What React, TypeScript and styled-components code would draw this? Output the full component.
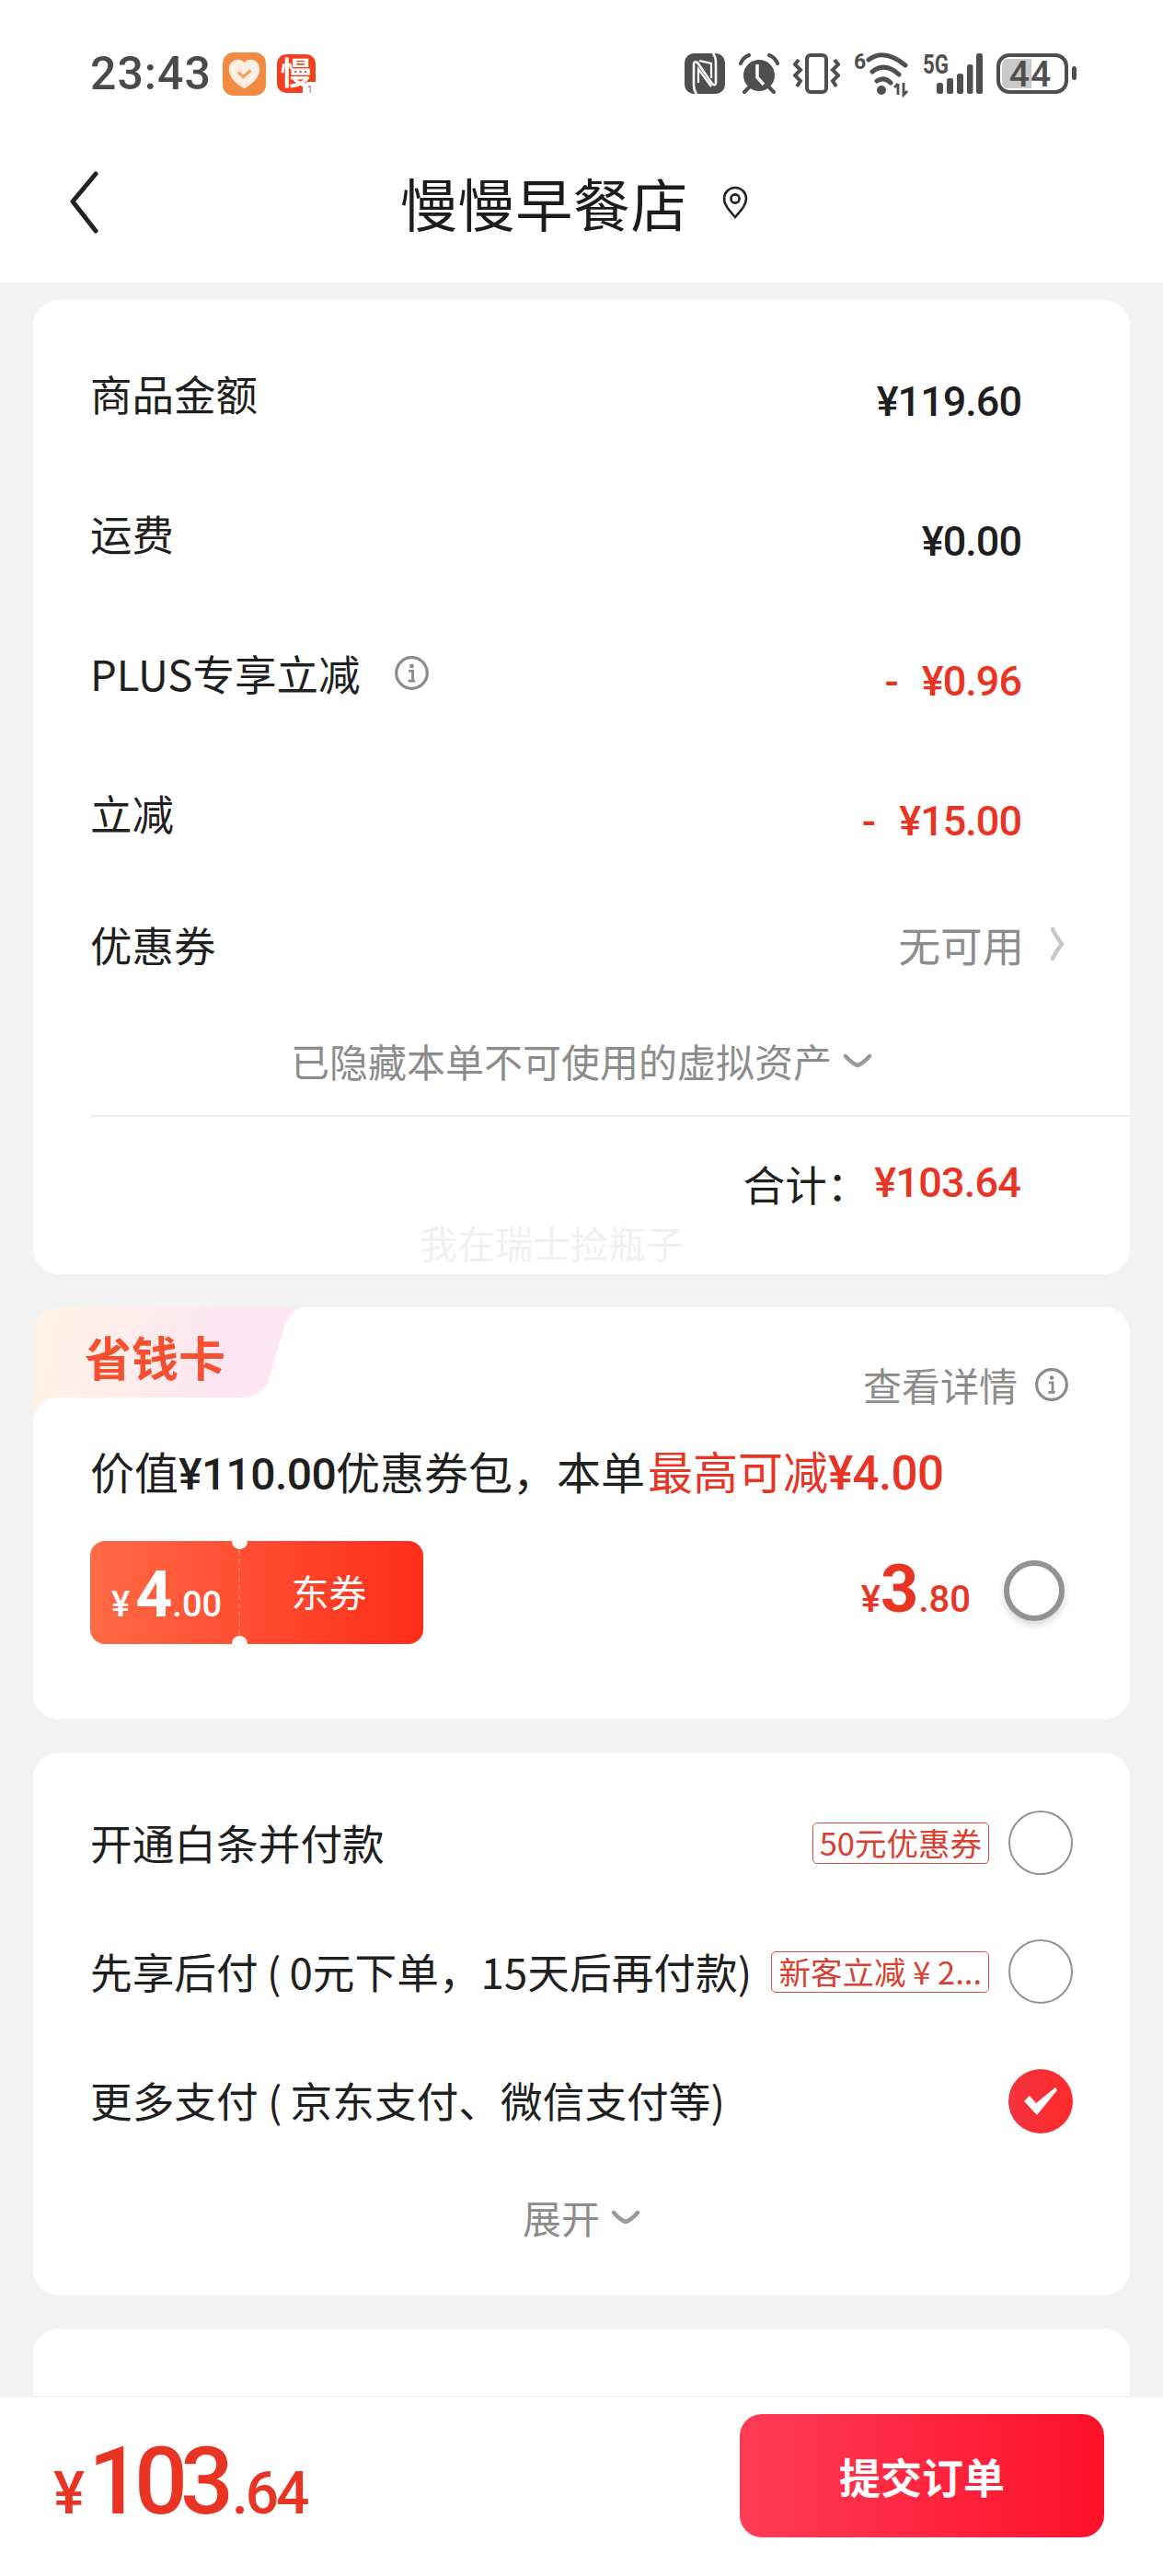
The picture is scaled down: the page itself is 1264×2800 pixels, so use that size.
import styled, { createGlobalStyle } from "styled-components";

const CJK = `"Noto Sans CJK SC", "Noto Sans", sans-serif`
const NUM = `"Roboto", "Noto Sans CJK SC", sans-serif`
const RED = "#e93323"

const GlobalStyle = createGlobalStyle`
    html, body {
        margin: 0;
        padding: 0;
        background: #f2f2f2;
        font-family: ${CJK};
        color: #1f1f1f;
    }
    * { box-sizing: border-box; }
`

const Screen = styled.div`
    position: relative;
    width: 1264px;
    height: 2800px;
    overflow: hidden;
    background: #f2f2f2;
    display: flex;
    flex-direction: column;
`

const Header = styled.header`
    background: #fff;
    height: 307px;
    flex: none;
`

const StatusBar = styled.div`
    height: 160px;
    padding: 48px 94px 0 98px;
    display: flex;
    justify-content: space-between;
    align-items: flex-start;
`

const StatusLeft = styled.div`
    display: flex;
    align-items: center;
    gap: 12px;
    height: 64px;
`

const Clock = styled.span`
    font: 500 50px/64px ${NUM};
    color: #4a4a4a;
    letter-spacing: 1px;
`

const StatusRight = styled.div`
    display: flex;
    align-items: center;
    height: 64px;
    gap: 15px;
`

const NavBar = styled.div`
    height: 120px;
    padding-left: 74px;
    display: flex;
    align-items: center;
`

const Title = styled.h1`
    margin: 0 0 0 327px;
    font: 400 62px/1 ${CJK};
    letter-spacing: 0.6px;
    color: #1c1c1c;
`

const PinIcon = styled.svg`
    margin-left: 36px;
`

const Content = styled.main`
    padding: 19px 36px 0;
    display: flex;
    flex-direction: column;
    gap: 36px;
`

const Card = styled.section`
    position: relative;
    background: #fff;
    border-radius: 28px;
    overflow: hidden;
`

const SummaryCard = styled(Card)`
    height: 1059px;
    padding-top: 71px;
`

const Row = styled.div<{ $h: number }>`
    height: ${p => p.$h}px;
    padding-left: 62px;
    display: flex;
    justify-content: space-between;
    align-items: flex-start;
`

const RowLabel = styled.span`
    display: flex;
    align-items: center;
    font: 400 45.5px/60px ${CJK};
    color: #1f1f1f;
`

const RowValue = styled.span<{ $red?: boolean }>`
    margin-right: 118px;
    margin-top: 10px;
    font: 500 45px/60px ${NUM};
    letter-spacing: -1px;
    word-spacing: 16px;
    color: ${p => p.$red ? RED : "#1f1f1f"};
`

const Muted = styled.span`
    display: flex;
    align-items: center;
    margin-right: 71px;
    gap: 28px;
    font: 400 45.5px/60px ${CJK};
    color: #8c8c8c;
`

const InfoSlot = styled.span`
    display: flex;
    margin-left: 37px;
`

const HiddenNote = styled.div`
    height: 118px;
    display: flex;
    justify-content: center;
    align-items: center;
    gap: 12px;
    font: 400 42px/60px ${CJK};
    color: #8c8c8c;
`

const Divider = styled.div`
    height: 2px;
    margin-left: 62px;
    background: #eeeeee;
`

const Total = styled.div`
    padding: 42px 119px 0 0;
    display: flex;
    justify-content: flex-end;
    align-items: center;
    font: 400 45.5px/60px ${CJK};
`

const TotalPrice = styled.span`
    margin-left: 6px;
    font: 500 45px/60px ${NUM};
    letter-spacing: -0.8px;
    color: ${RED};
`

const Watermark = styled.div`
    position: absolute;
    left: 420px;
    top: 996px;
    font: 400 41px/56px ${CJK};
    color: #f0f0f0;
`

const SaverCard = styled(Card)`
    height: 448px;
`

const SaverTab = styled.div`
    position: absolute;
    left: 0;
    top: 0;
    width: 292px;
    height: 130px;
    background: linear-gradient(100deg, #fff3e6, #fde5f1 70%);
    clip-path: path("M0 0 H292 Q280 3 274 18 L256 78 Q249 98 225 98 H30 V130 H0 Z");
`

const SaverTabLabel = styled.div`
    position: absolute;
    left: 56px;
    top: 23px;
    font: 700 51px/60px ${CJK};
    color: #f5502f;
`

const SaverBody = styled.div`
    position: absolute;
    left: 0;
    right: 0;
    top: 98px;
    bottom: 0;
    background: #fff;
    border-radius: 28px 0 0 0;
    padding: 0 62px;
`

const DetailLink = styled.div`
    display: flex;
    justify-content: flex-end;
    align-items: center;
    gap: 18px;
    margin: -44px 4px 0 0;
    font: 400 42px/60px ${CJK};
    color: #8c8c8c;
`

const PromoLine = styled.div`
    margin-top: 33px;
    font: 400 48px/60px ${CJK};
    white-space: nowrap;
    color: #1f1f1f;
`

const PromoRed = styled.span`
    margin-left: 3px;
    font-size: 49px;
    color: ${RED};
`

const PromoNum = styled.span<{ $big?: boolean }>`
    font: 500 ${p => p.$big ? 51 : 48}px/60px ${NUM};
    letter-spacing: -0.6px;
`

const VoucherRow = styled.div`
    margin-top: 42px;
    display: flex;
    align-items: center;
    justify-content: space-between;
`

const Voucher = styled.div`
    position: relative;
    width: 362px;
    height: 112px;
    border-radius: 16px;
    background: linear-gradient(90deg, #ff6a45, #ff2d1a);
    display: flex;
    color: #fff;
`

const Notch = styled.i<{ $bottom?: boolean }>`
    position: absolute;
    left: 154px;
    ${p => p.$bottom ? "bottom: -8px;" : "top: -8px;"}
    width: 17px;
    height: 17px;
    border-radius: 50%;
    background: #fff;
`

const VoucherValue = styled.div`
    width: 163px;
    border-right: 2px dashed rgba(255, 255, 255, 0.22);
    padding-left: 23px;
    display: flex;
    align-items: baseline;
    font: 500 38px/116px ${NUM};
    white-space: nowrap;
`

const VoucherBig = styled.span`
    margin-left: 6px;
    font: 700 70px/116px ${NUM};
`

const VoucherName = styled.div`
    flex: 1;
    text-align: center;
    padding-right: 6px;
    font: 400 41px/108px ${CJK};
`

const SaverPrice = styled.div`
    display: flex;
    align-items: baseline;
    margin-left: auto;
    margin-right: 36px;
    margin-top: 4px;
    font: 500 40px/70px ${NUM};
    color: ${RED};
`

const SaverPriceBig = styled.span`
    font: 700 72px/70px ${NUM};
`

const Radio = styled.div<{ $size: number; $shadow?: boolean; $w?: number; $end?: number; $lift?: number }>`
    flex: none;
    width: ${p => p.$size}px;
    height: ${p => p.$size}px;
    margin-top: ${p => p.$lift ?? 0}px;
    margin-right: ${p => p.$end ?? 0}px;
    border-radius: 50%;
    border: ${p => p.$w ?? 2}px solid #939393;
    background: #fff;
    ${p => p.$shadow ? "box-shadow: 0 5px 8px rgba(0, 0, 0, 0.14);" : ""}
`

const PayCard = styled(Card)`
    height: 590px;
    padding: 27px 62px 0;
`

const PayRow = styled.div`
    height: 140px;
    display: flex;
    align-items: center;
    justify-content: space-between;
    font: 400 45.7px/60px ${CJK};
    white-space: nowrap;
    color: #1f1f1f;
`

const PayRight = styled.div`
    display: flex;
    align-items: center;
    gap: 21px;
`

const Tag = styled.span`
    display: inline-block;
    height: 45px;
    margin-top: 2px;
    padding: 0 7px;
    border: 1.5px solid #d9503f;
    border-radius: 5px;
    font: 400 34.5px/41px ${CJK};
    color: #d9402f;
    white-space: nowrap;
`

const CheckedRadio = styled.div`
    flex: none;
    width: 70px;
    height: 70px;
    margin-top: 4px;
    border-radius: 50%;
    background: linear-gradient(90deg, #f2333f, #ff2a2a);
    display: flex;
    align-items: center;
    justify-content: center;
`

const Expand = styled.div`
    margin-top: 28px;
    display: flex;
    justify-content: center;
    align-items: center;
    gap: 12px;
    font: 400 42px/60px ${CJK};
    color: #8c8c8c;
`

const EmptyCard = styled(Card)`
    height: 200px;
`

const Footer = styled.footer`
    position: absolute;
    left: 0;
    right: 0;
    top: 2604px;
    height: 196px;
    background: #fff;
    border-top: 2px solid #f4f4f4;
    padding: 18px 64px 0 58px;
    display: flex;
    justify-content: space-between;
    align-items: flex-start;
`

const FooterPrice = styled.div`
    display: flex;
    align-items: baseline;
    margin-top: 18px;
    font: 500 64px/110px ${NUM};
    letter-spacing: -3px;
    color: ${RED};
`

const FooterBig = styled.span`
    margin-left: 7px;
    font: 500 102px/110px ${NUM};
    letter-spacing: -8px;
`

const FooterCents = styled.span`
    margin-left: 6px;
`

const SubmitButton = styled.button`
    width: 396px;
    height: 134px;
    border: none;
    border-radius: 24px;
    background: linear-gradient(90deg, #ff3c56, #ff1029);
    color: #fff;
    font: 700 45px/1 ${CJK};
`

function Chevron({ color = "#9a9a9a" }: { color?: string }) {
    return <svg width={32} height={20} viewBox="0 0 32 20" fill="none">
        <path d="M3 5 Q10 13 16 15 Q22 13 29 5" stroke={color} strokeWidth="4.5" strokeLinecap="round" />
    </svg>
}

function InfoIcon({ size, color }: { size: number; color: string }) {
    return <svg width={size} height={size} viewBox="0 0 36 36" fill="none">
        <circle cx="18" cy="18" r="15.5" stroke={color} strokeWidth="3" />
        <circle cx="18" cy="11" r="2.2" fill={color} />
        <path d="M15 16h4v10M14.5 26h7" stroke={color} strokeWidth="2.6" />
    </svg>
}

function StatusIcons() {
    const c = "#4f4f4f"
    return <>
        <svg width={44} height={44} viewBox="0 0 44 44" fill="none">
            <rect width="44" height="44" rx="10" fill={c} />
            <path d="M13 44Q10 40 10 35V12Q10 8 14 10L30 33Q34 36 34 32V9Q34 4 31 0" stroke="#fff" strokeWidth="2.6" />
            <path d="M15 32V17L29 36M29 27V11L16 8" stroke="#fff" strokeWidth="2.2" />
        </svg>
        <svg width={44} height={44} viewBox="0 0 44 44">
            <circle cx="22" cy="24" r="17" fill={c} />
            <path d="M2 11 Q5 4 11 2M42 11 Q39 4 33 2M6 42l5-5M38 42l-5-5" fill="none" stroke={c} strokeWidth="4" strokeLinecap="round" />
            <path d="M20 12v14l7 8" stroke="#fff" strokeWidth="3.5" fill="none" />
        </svg>
        <svg width={51} height={44} viewBox="0 0 51 44" fill="none">
            <rect x="15" y="2" width="21" height="40" rx="4" stroke={c} strokeWidth="4" />
            <path d="M6 7L2 12 8 18 2 24 8 30 4 36M45 7L49 12 43 18 49 24 43 30 47 36" stroke={c} strokeWidth="4" />
        </svg>
        <svg width={60} height={60} viewBox="0 -7 60 60" fill="none">
            <path d="M16 8Q33 -5 56 14M20 21Q34 10 49 24M25 31Q33 26 40 33" stroke={c} strokeWidth="5" strokeLinecap="round" />
            <circle cx="30" cy="41" r="5" fill={c} />
            <path d="M48 46V34M44 38l4-4M54 33v13l4-4" stroke={c} strokeWidth="2.8" />
            <text x="0" y="18" fontSize="23" fontWeight="700" fontFamily="Roboto" fill={c}>6</text>
        </svg>
        <svg width={65} height={60} viewBox="0 -8 65 60" fill={c}>
            <text x="0" y="22" fontSize="29" fontWeight="700" fontFamily="Roboto" textLength="28" lengthAdjust="spacingAndGlyphs">5G</text>
            <rect x="15" y="32" width="7" height="12" rx="2.5" />
            <rect x="26" y="27" width="7" height="17" rx="2.5" />
            <rect x="37" y="22" width="7" height="22" rx="2.5" />
            <rect x="48" y="12" width="6.5" height="32" rx="2.5" />
            <rect x="58" y="0" width="7" height="44" rx="2.5" />
        </svg>
        <svg width={87} height={56} viewBox="0 -6 87 56">
            <rect x="2" y="2" width="74" height="40" rx="12" fill="none" stroke={c} strokeWidth="4" />
            <path d="M6 12q0-6 6-6h26v32H12q-6 0-6-6z" fill="#c9c9c9" />
            <text x="37" y="36" textAnchor="middle" fontSize="39" fontWeight="500" fontFamily="Roboto" fill={c} letterSpacing="1">44</text>
            <rect x="82" y="14" width="5" height="15" rx="2.5" fill={c} />
        </svg>
    </>
}

function AppBadges() {
    return <>
        <svg width={47} height={47} viewBox="0 0 48 48">
            <rect width="48" height="48" rx="12" fill="#f28a42" />
            <path d="M24 40C12 33 7 26 7 18c0-6 5-10 10-10 3 0 5 1 7 3 2-2 4-3 7-3 5 0 10 4 10 10 0 8-5 15-17 22z" fill="#fbeee2" />
            <path d="M17 22l6 5 8-7" fill="none" stroke="#f0a468" strokeWidth="3.4" />
        </svg>
        <svg width={42} height={56} viewBox="0 -6 42 56">
            <rect width="42" height="42" y="1" rx="10" fill="#f2401f" />
            <text x="21" y="34" textAnchor="middle" fontSize="34" fontWeight="700" fontFamily="Noto Sans CJK SC" fill="#fff">慢</text>
            <path d="M28 44 L42 44 L42 31 L33 31 L28 36 Z" fill="#fff" />
            <text x="33" y="43" fontSize="10" fontFamily="Roboto" fill="#777">1</text>
        </svg>
    </>
}

export default function App() {
    return <Screen>
        <GlobalStyle />
        <Header>
            <StatusBar>
                <StatusLeft>
                    <Clock>23:43</Clock>
                    <AppBadges />
                </StatusLeft>
                <StatusRight>
                    <StatusIcons />
                </StatusRight>
            </StatusBar>
            <NavBar>
                <svg width={34} height={68} viewBox="0 0 34 68" fill="none">
                    <path d="M30 3 L5 33 L30 65" stroke="#222" strokeWidth="5" strokeLinecap="round" strokeLinejoin="round" />
                </svg>
                <Title>慢慢早餐店</Title>
                <PinIcon width={30} height={36} viewBox="0 0 30 36" fill="none">
                    <path d="M15 34C7 25 3 20 3 14a12 12 0 0 1 24 0c0 6-4 11-12 20z" stroke="#222" strokeWidth="2.6" />
                    <circle cx="15" cy="14" r="4.6" stroke="#222" strokeWidth="2.6" />
                </PinIcon>
            </NavBar>
        </Header>

        <Content>
            <SummaryCard>
                <Row $h={152}>
                    <RowLabel>商品金额</RowLabel>
                    <RowValue>¥119.60</RowValue>
                </Row>
                <Row $h={152}>
                    <RowLabel>运费</RowLabel>
                    <RowValue>¥0.00</RowValue>
                </Row>
                <Row $h={152}>
                    <RowLabel>
                        PLUS专享立减
                        <InfoSlot><InfoIcon size={39} color="#8c8c8c" /></InfoSlot>
                    </RowLabel>
                    <RowValue $red>- ¥0.96</RowValue>
                </Row>
                <Row $h={143}>
                    <RowLabel>立减</RowLabel>
                    <RowValue $red>- ¥15.00</RowValue>
                </Row>
                <Row $h={98}>
                    <RowLabel>优惠券</RowLabel>
                    <Muted>
                        无可用
                        <svg width={16} height={36} viewBox="0 0 16 36" fill="none">
                            <path d="M3 2 Q7 10 13 18 Q7 26 3 34" stroke="#c8c8c8" strokeWidth="4.5" strokeLinecap="round" />
                        </svg>
                    </Muted>
                </Row>
                <HiddenNote>
                    已隐藏本单不可使用的虚拟资产
                    <Chevron />
                </HiddenNote>
                <Divider />
                <Total>
                    {"合计\uFF1A"}
                    <TotalPrice>¥103.64</TotalPrice>
                </Total>
                <Watermark>我在瑞士捡瓶子</Watermark>
            </SummaryCard>

            <SaverCard>
                <SaverTab />
                <SaverTabLabel>省钱卡</SaverTabLabel>
                <SaverBody>
                    <DetailLink>
                        查看详情
                        <InfoIcon size={38} color="#8c8c8c" />
                    </DetailLink>
                    <PromoLine>
                        价值<PromoNum>¥110.00</PromoNum>{"优惠券包\uFF0C本单"}
                        <PromoRed>最高可减<PromoNum $big>¥4.00</PromoNum></PromoRed>
                    </PromoLine>
                    <VoucherRow>
                        <Voucher>
                            <Notch />
                            <Notch $bottom />
                            <VoucherValue>¥<VoucherBig>4</VoucherBig>.00</VoucherValue>
                            <VoucherName>东券</VoucherName>
                        </Voucher>
                        <SaverPrice>¥<SaverPriceBig>3</SaverPriceBig>.80</SaverPrice>
                        <Radio $size={66} $w={6} $shadow $end={9} $lift={-4} />
                    </VoucherRow>
                </SaverBody>
            </SaverCard>

            <PayCard>
                <PayRow>
                    开通白条并付款
                    <PayRight>
                        <Tag>50元优惠券</Tag>
                        <Radio $size={70} $lift={2} />
                    </PayRight>
                </PayRow>
                <PayRow>
                    {"先享后付\u2009(\u20090元下单\uFF0C15天后再付款)"}
                    <PayRight>
                        <Tag>新客立减 ¥ 2...</Tag>
                        <Radio $size={70} $lift={2} />
                    </PayRight>
                </PayRow>
                <PayRow>
                    {"更多支付 (\u2009京东支付、微信支付等)"}
                    <CheckedRadio>
                        <svg width={38} height={32} viewBox="0 0 38 32">
                            <path d="M1 16 L7 10 L14 18 L35 1 L37 4 L15 31 Z" fill="#fff" />
                        </svg>
                    </CheckedRadio>
                </PayRow>
                <Expand>展开<Chevron /></Expand>
            </PayCard>

            <EmptyCard />
        </Content>

        <Footer>
            <FooterPrice>¥<FooterBig>103</FooterBig><FooterCents>.64</FooterCents></FooterPrice>
            <SubmitButton>提交订单</SubmitButton>
        </Footer>
    </Screen>
}
